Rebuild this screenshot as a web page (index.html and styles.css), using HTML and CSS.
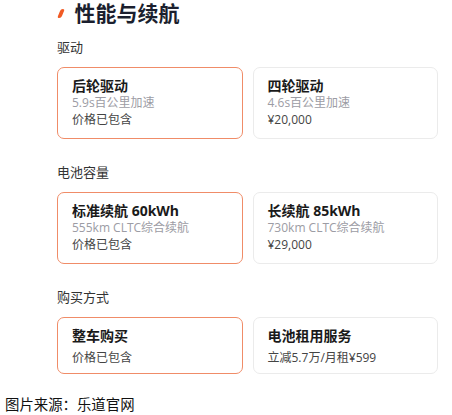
FILE: index.html
```html
<!DOCTYPE html>
<html lang="zh-CN">
<head>
    <meta charset="UTF-8">
    <meta name="viewport" content="width=device-width, initial-scale=1.0">
    <title>性能与续航</title>
    <link rel="stylesheet" href="styles.css">
</head>
<body>

<div class="panel">
    <h1 class="title"><span class="mark"></span>性能与续航</h1>

    <div class="group">
        <div class="group-label">驱动</div>
        <div class="options">
            <div class="option selected">
                <div class="option-name">后轮驱动</div>
                <div class="option-desc">5.9s百公里加速</div>
                <div class="option-price">价格已包含</div>
            </div>
            <div class="option">
                <div class="option-name">四轮驱动</div>
                <div class="option-desc">4.6s百公里加速</div>
                <div class="option-price">¥20,000</div>
            </div>
        </div>
    </div>

    <div class="group">
        <div class="group-label">电池容量</div>
        <div class="options">
            <div class="option selected">
                <div class="option-name">标准续航 60kWh</div>
                <div class="option-desc">555km CLTC综合续航</div>
                <div class="option-price">价格已包含</div>
            </div>
            <div class="option">
                <div class="option-name">长续航 85kWh</div>
                <div class="option-desc">730km CLTC综合续航</div>
                <div class="option-price">¥29,000</div>
            </div>
        </div>
    </div>

    <div class="group">
        <div class="group-label">购买方式</div>
        <div class="options">
            <div class="option selected short">
                <div class="option-name">整车购买</div>
                <div class="option-price">价格已包含</div>
            </div>
            <div class="option short">
                <div class="option-name">电池租用服务</div>
                <div class="option-price">立减5.7万/月租¥599</div>
            </div>
        </div>
    </div>
</div>

<p class="source">图片来源：乐道官网</p>

</body>
</html>
```

FILE: styles.css
```css
/* Reset */
* {
    margin: 0;
    padding: 0;
    box-sizing: border-box;
}

body {
    font-family: 'Open Sans', 'Noto Sans CJK SC', sans-serif;
    background: #fff;
    color: #222;
    width: 452px;
    height: 415px;
    overflow: hidden;
}

/* Panel */
.panel {
    padding-left: 57px;
    width: 438px;
}

.title {
    display: flex;
    align-items: center;
    font-size: 21px;
    line-height: 26px;
    font-weight: 700;
    color: #1b1f2e;
}

.mark {
    display: inline-block;
    width: 3.5px;
    height: 9px;
    margin: 0 12px 0 2px;
    background: #f15a24;
    border-radius: 2px;
    transform: skewX(-22deg);
}

/* Option groups */
.group {
    margin-top: 24px;
}

.group:first-of-type {
    margin-top: 12px;
}

.group-label {
    font-size: 13px;
    line-height: 18px;
    color: #333;
    margin-bottom: 11px;
}

.options {
    display: grid;
    grid-template-columns: 1fr 1fr;
    gap: 10px;
}

.option {
    height: 72px;
    padding: 9px 14px 0;
    border: 1.5px solid #ebebeb;
    border-radius: 7px;
}

.option.short {
    height: 57px;
}

.option.selected {
    border-color: #f08c68;
}

.option-name {
    font-size: 14px;
    line-height: 18px;
    font-weight: 700;
    color: #1a1a1a;
}

.option-desc {
    font-size: 12px;
    line-height: 16px;
    color: #9c9ca4;
}

.option-price {
    font-size: 12px;
    line-height: 17px;
    color: #444;
}

.short .option-name {
    margin-bottom: 4px;
}

/* Footer */
.source {
    margin: 20px 0 0 5px;
    font-family: 'Noto Sans CJK SC', sans-serif;
    font-size: 14.4px;
    line-height: 20px;
    color: #111;
}
```
